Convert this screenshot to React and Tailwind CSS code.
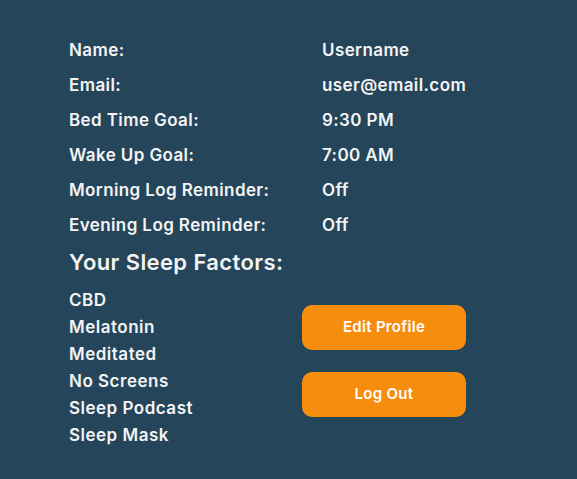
import React from 'react';

const info = [
  ['Name:', 'Username'],
  ['Email:', 'user@email.com'],
  ['Bed Time Goal:', '9:30 PM'],
  ['Wake Up Goal:', '7:00 AM'],
  ['Morning Log Reminder:', 'Off'],
  ['Evening Log Reminder:', 'Off'],
];

const factors = ['CBD', 'Melatonin', 'Meditated', 'No Screens', 'Sleep Podcast', 'Sleep Mask'];

export default function App() {
  return (
    <div className="w-[577px] h-[479px] bg-[#25455a] text-[#f4f4f4] font-['Inter',sans-serif] overflow-hidden">
      <div className="pl-[69px] pt-[33px]">
        {info.map(([label, value]) => (
          <div key={label} className="flex items-center h-[35px] text-[17px] tracking-[0.4px] font-semibold">
            <span className="w-[253px]">{label}</span>
            <span>{value}</span>
          </div>
        ))}

        <h2 className="mt-[5px] h-[28px] flex items-center text-[22px] tracking-[0.4px] font-semibold">Your Sleep Factors:</h2>

        <div className="flex mt-[11px]">
          <ul className="w-[233px] text-[17px] tracking-[0.5px] font-semibold">
            {factors.map(f => (
              <li key={f} className="h-[27px] flex items-center">{f}</li>
            ))}
          </ul>
          <div className="flex flex-col gap-[22px] pt-[18px]">
            <button className="w-[164px] h-[45px] rounded-[10px] bg-[#f68d0d] text-white text-[15px] tracking-[0.3px] font-semibold">
              Edit Profile
            </button>
            <button className="w-[164px] h-[45px] rounded-[10px] bg-[#f68d0d] text-white text-[15px] tracking-[0.3px] font-semibold">
              Log Out
            </button>
          </div>
        </div>
      </div>
    </div>
  );
}
